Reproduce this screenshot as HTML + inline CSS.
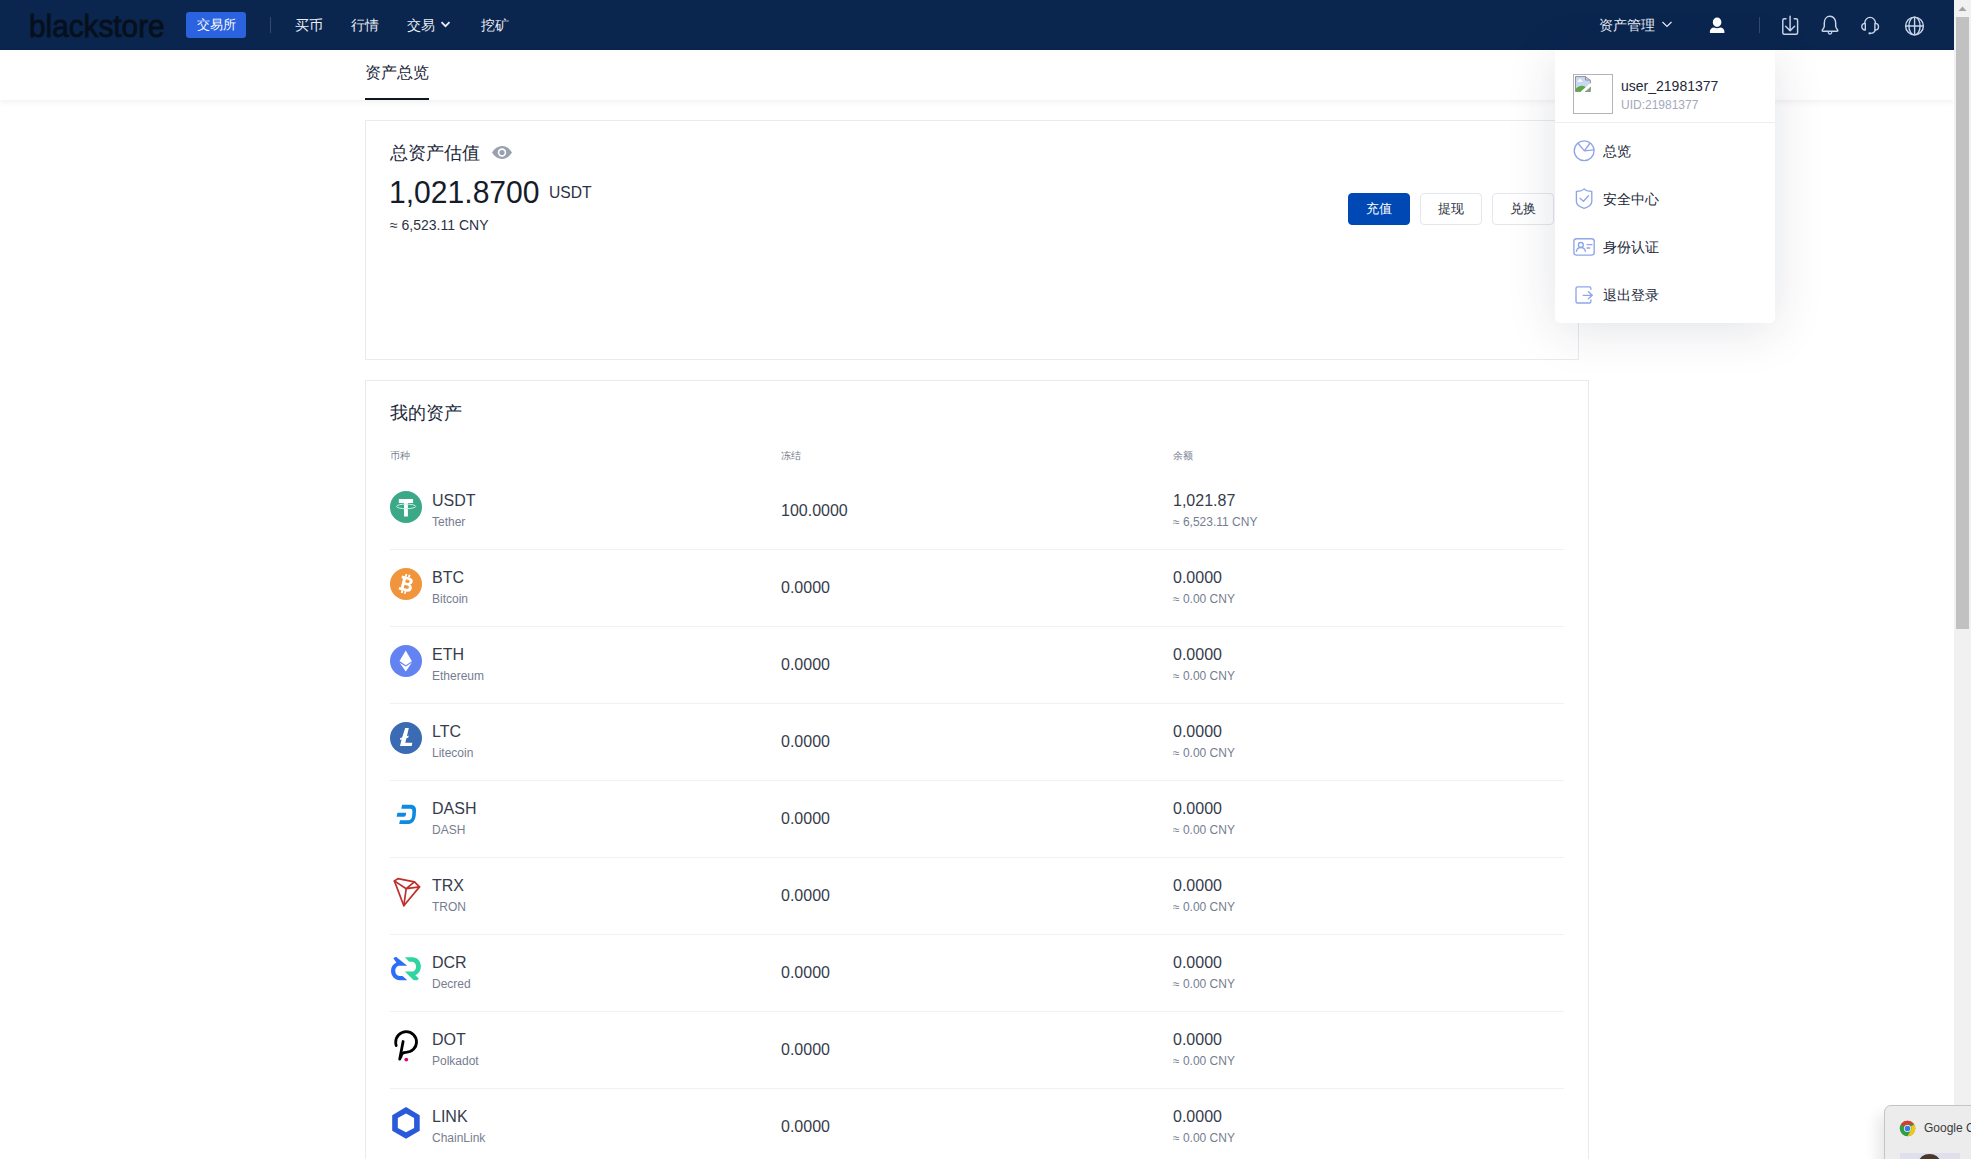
<!DOCTYPE html>
<html><head><meta charset="utf-8">
<style>
*{margin:0;padding:0;box-sizing:border-box}
html,body{width:1971px;height:1159px;overflow:hidden;background:#fff;font-family:"Liberation Sans",sans-serif;color:#1f2533}
#hdr{position:absolute;left:0;top:0;width:1954px;height:50px;background:#0a254e}
#logo{position:absolute;left:29px;top:8px;font-size:32px;line-height:37px;color:#06101c;transform:scaleX(0.93);transform-origin:0 0;-webkit-text-stroke:0.8px #06101c;white-space:nowrap}
#exbtn{position:absolute;left:186px;top:12px;width:60px;height:26px;background:#2a62e0;border-radius:3px;color:#fff;font-size:13px;line-height:26px;text-align:center}
.vdiv{position:absolute;width:1px;background:#34496e}
.nav{position:absolute;top:16px;font-size:14px;color:#e9edf5;line-height:18px}
.hic{position:absolute}
#sub{position:absolute;left:0;top:50px;width:1954px;height:50px;background:#fff;box-shadow:0 2px 6px rgba(0,0,0,0.06)}
#tab{position:absolute;left:365px;top:13px;font-size:16px;line-height:20px;color:#22283a}
#tabline{position:absolute;left:365px;top:48px;width:64px;height:2px;background:#111624}
.card{position:absolute;border:1px solid #e8eaef;background:#fff}
#c1title{position:absolute;left:390px;top:142px;font-size:18px;line-height:22px;color:#22283a}
#bignum{position:absolute;left:389px;top:174px;font-size:32px;line-height:36px;color:#161b2a;transform:scaleX(0.94);transform-origin:0 0;white-space:nowrap}
#bigunit{position:absolute;left:549px;top:183px;font-size:17px;line-height:19px;color:#2b3142;transform:scaleX(0.92);transform-origin:0 0}
#bigcny{position:absolute;left:390px;top:217px;font-size:14px;line-height:16px;color:#2b3142}
.btn{position:absolute;top:193px;width:62px;height:32px;border-radius:4px;font-size:13px;line-height:30px;text-align:center;border:1px solid #e3e6ec;color:#2b3142;background:#fff}
.btn.pri{background:#0049b4;border-color:#0049b4;color:#fff}
#c2title{position:absolute;left:390px;top:402px;font-size:18px;line-height:22px;color:#22283a}
.th{position:absolute;top:449px;font-size:10px;line-height:13px;color:#767d8f}
.row{position:absolute;left:390px;width:1174px;height:77px}
.row .ic{position:absolute;left:0;top:19px;width:32px;height:32px}
.row .ic svg{display:block}
.row .sym{position:absolute;left:42px;top:20px;font-size:16px;line-height:18px;color:#363c4c}
.row .nm{position:absolute;left:42px;top:43px;font-size:12px;line-height:14px;color:#767d90}
.row .frz{position:absolute;left:391px;top:30px;font-size:16px;line-height:18px;color:#363c4c}
.row .bal{position:absolute;left:783px;top:20px;font-size:16px;line-height:18px;color:#363c4c}
.row .cny{position:absolute;left:783px;top:43px;font-size:12px;line-height:14px;color:#767d90}
.row .sep{position:absolute;left:0;top:77px;width:1174px;height:1px;background:#f0f1f4}
#dd{position:absolute;left:1555px;top:50px;width:220px;height:273px;background:#fff;border-radius:0 0 5px 5px;box-shadow:0 6px 50px rgba(30,40,70,0.13)}
#avatar{position:absolute;left:18px;top:24px;width:40px;height:40px;border:1px solid #b4b4b4}
#uname{position:absolute;left:66px;top:28px;font-size:14px;line-height:16px;color:#22283a}
#uid{position:absolute;left:66px;top:48px;font-size:12px;line-height:14px;color:#a3a9bc}
#ddsep{position:absolute;left:0;top:72px;width:220px;height:1px;background:#eceef2}
.ddi{position:absolute;left:48px;font-size:14px;line-height:16px;color:#22283a}
.ddic{position:absolute;left:17px}
#scroll{position:absolute;left:1954px;top:0;width:17px;height:1159px;background:#f1f1f1}
#thumb{position:absolute;left:1956px;top:17px;width:13px;height:612px;background:#c1c1c1}
#notif{position:absolute;left:1884px;top:1105px;width:120px;height:80px;background:#ececec;border:1px solid #c4c4c4;border-radius:7px;box-shadow:-7px 9px 14px rgba(0,0,0,0.09)}
#ntext{white-space:nowrap;position:absolute;left:39px;top:15px;font-size:12px;line-height:14px;color:#3a3a3a}
#nimg{position:absolute;left:15px;top:47px;width:60px;height:20px;background:#dfe0ec}
</style></head><body>
<div id="hdr">
  <div id="logo">blackstore</div>
  <div id="exbtn">交易所</div>
  <div class="vdiv" style="left:270px;top:17px;height:16px"></div>
  <div class="nav" style="left:295px">买币</div>
  <div class="nav" style="left:351px">行情</div>
  <div class="nav" style="left:407px">交易</div>
  <svg class="hic" style="left:440px;top:20px" width="11" height="9" viewBox="0 0 11 9"><path d="M1.5 2.2L5.5 6.2 9.5 2.2" fill="none" stroke="#e9edf5" stroke-width="1.8"/></svg>
  <div class="nav" style="left:481px">挖矿</div>
  <div class="nav" style="left:1599px">资产管理</div>
  <svg class="hic" style="left:1661px;top:20px" width="12" height="9" viewBox="0 0 12 9"><path d="M1.5 2L6 6.5 10.5 2" fill="none" stroke="#e9edf5" stroke-width="1.2"/></svg>
  <svg class="hic" style="left:1709px;top:16px" width="17" height="18" viewBox="0 0 17 18"><path d="M8.1 1.4C10.6 1.4 12.4 3.5 12.4 6.1 12.4 8.8 10.5 11 8.1 11 5.7 11 3.8 8.8 3.8 6.1 3.8 3.5 5.6 1.4 8.1 1.4Z" fill="#fff"/><path d="M0.9 17.1V15.6C0.9 13.4 2.6 11.6 5 11.5 6 12.1 7.1 12.3 8.1 12.3S10.2 12.1 11.2 11.5C13.7 11.6 15.4 13.4 15.4 15.6V17.1Z" fill="#fff"/></svg>
  <div class="vdiv" style="left:1759px;top:17px;height:16px"></div>
  <svg class="hic" style="left:1781px;top:15px" width="19" height="21" viewBox="0 0 19 21"><g fill="none" stroke="#c8d5e8" stroke-width="1.45" stroke-linecap="round" stroke-linejoin="round"><path d="M5 3.7H3.3C2.4 3.7 1.8 4.3 1.8 5.2V17.8C1.8 18.7 2.4 19.3 3.3 19.3H15.1C16 19.3 16.6 18.7 16.6 17.8V5.2C16.6 4.3 16 3.7 15.1 3.7H13.2"/><path d="M9.1 1.1V15.6M4.6 11.2L9.1 15.7 13.6 11.2"/></g></svg>
  <svg class="hic" style="left:1820px;top:15px" width="20" height="21" viewBox="0 0 20 21"><g fill="none" stroke="#c8d5e8" stroke-width="1.45" stroke-linecap="round" stroke-linejoin="round"><path d="M10 1.3C6.6 1.3 4.3 4.2 4.3 8V11.3C4.3 12.9 2.5 14.2 2.2 15.4 2.1 15.9 2.4 16.2 3 16.2H17C17.6 16.2 17.9 15.9 17.8 15.4 17.5 14.2 15.7 12.9 15.7 11.3V8C15.7 4.2 13.4 1.3 10 1.3Z"/><path d="M8.3 17.6C8.6 18.6 9.2 19.1 10 19.1S11.4 18.6 11.7 17.6"/></g></svg>
  <svg class="hic" style="left:1860px;top:15px" width="22" height="22" viewBox="0 0 22 22"><g fill="none" stroke="#c8d5e8" stroke-width="1.4" stroke-linecap="round" stroke-linejoin="round"><path d="M4.7 8.4C4.7 5 7.1 2.4 10.1 2.4S15.5 5 15.5 8.4"/><path d="M5.3 8.4V15C3.1 15 1.8 13.5 1.8 11.7S3.1 8.4 5.3 8.4Z"/><path d="M14.9 8.4V15C17.1 15 18.5 13.5 18.5 11.7S17.1 8.4 14.9 8.4Z"/><path d="M15.2 15.2C14.7 17.2 13 18.3 10.4 18.4"/></g><ellipse cx="9.7" cy="18.35" rx="1.35" ry="1.1" fill="#c8d5e8"/></svg>
  <svg class="hic" style="left:1903px;top:15px" width="22" height="22" viewBox="0 0 22 22"><g fill="none" stroke="#c8d5e8" stroke-width="1.4"><circle cx="11.5" cy="11" r="8.9"/><ellipse cx="11.5" cy="11" rx="5.6" ry="8.9"/><path d="M11.6 2.1V19.9M2.6 11H20.4"/></g></svg>
</div>
<div id="sub">
  <div id="tab">资产总览</div>
  <div id="tabline"></div>
</div>

<div class="card" style="left:365px;top:120px;width:1214px;height:240px"></div>
<div id="c1title">总资产估值</div>
<svg style="position:absolute;left:491px;top:145px" width="22" height="15" viewBox="0 0 22 15"><path d="M1 7.5C3.5 3.2 7 1 11 1s7.5 2.2 10 6.5C18.5 11.8 15 14 11 14S3.5 11.8 1 7.5z" fill="#9aa0ae"/><circle cx="11" cy="7.5" r="4.2" fill="#fff"/><circle cx="11" cy="7.5" r="2.6" fill="#9aa0ae"/></svg>
<div id="bignum">1,021.8700</div>
<div id="bigunit">USDT</div>
<div id="bigcny">≈ 6,523.11 CNY</div>
<div class="btn pri" style="left:1348px">充值</div>
<div class="btn" style="left:1420px">提现</div>
<div class="btn" style="left:1492px">兑换</div>

<div class="card" style="left:365px;top:380px;width:1224px;height:820px"></div>
<div id="c2title">我的资产</div>
<div class="th" style="left:390px">币种</div>
<div class="th" style="left:781px">冻结</div>
<div class="th" style="left:1173px">余额</div>
<div class="row" style="top:472px">
<div class="ic"><svg width="32" height="32" viewBox="0 0 32 32"><circle cx="16" cy="16" r="16" fill="#3ba987"/><path d="M8.8 8h14.3v4.05h-5.2V25.4h-3.9V12.05H8.8z" fill="#fff"/><ellipse cx="16.1" cy="15.4" rx="9.6" ry="2.3" fill="none" stroke="#c6f5e2" stroke-width="1"/></svg></div>
<div class="sym">USDT</div><div class="nm">Tether</div>
<div class="frz">100.0000</div>
<div class="bal">1,021.87</div><div class="cny">≈ 6,523.11 CNY</div>
<div class="sep"></div>
</div>
<div class="row" style="top:549px">
<div class="ic"><svg width="32" height="32" viewBox="0 0 32 32"><circle cx="16" cy="16" r="16" fill="#f0953c"/><g transform="rotate(14 16 16)" fill="#fff"><path fill-rule="evenodd" d="M10.2 8.8H17.6C20.4 8.8 22 10.3 22 12.5 22 14 21.2 15 20 15.5 21.7 16 22.7 17.3 22.7 19.2 22.7 21.7 20.8 23.2 17.9 23.2H10.2V20.6H11.8V11.4H10.2ZM14.8 11.5V14.6H17.2C18.4 14.6 19 14 19 13.05S18.4 11.5 17.2 11.5ZM14.8 17.1V20.5H17.6C19 20.5 19.7 19.8 19.7 18.8S19 17.1 17.6 17.1Z"/><path d="M13.1 6.2h1.8v2.8h-1.8zM16.3 6.2h1.8v2.8h-1.8zM13.1 23h1.8v2.8h-1.8zM16.3 23h1.8v2.8h-1.8z"/></g></svg></div>
<div class="sym">BTC</div><div class="nm">Bitcoin</div>
<div class="frz">0.0000</div>
<div class="bal">0.0000</div><div class="cny">≈ 0.00 CNY</div>
<div class="sep"></div>
</div>
<div class="row" style="top:626px">
<div class="ic"><svg width="32" height="32" viewBox="0 0 32 32"><circle cx="16" cy="16" r="16" fill="#6283f1"/><path d="M15.8 5.4L21.9 16.2 15.8 20.2 9.5 16z" fill="#fff"/><path d="M9.6 17.8L15.8 21.5 21.9 17.6 15.8 26.4z" fill="#fff"/></svg></div>
<div class="sym">ETH</div><div class="nm">Ethereum</div>
<div class="frz">0.0000</div>
<div class="bal">0.0000</div><div class="cny">≈ 0.00 CNY</div>
<div class="sep"></div>
</div>
<div class="row" style="top:703px">
<div class="ic"><svg width="32" height="32" viewBox="0 0 32 32"><circle cx="16" cy="16" r="16" fill="#3b6bb3"/><path d="M15.2 6H18.8L16.9 14.3 18.7 13.6 18.3 15.6 16.4 16.3 15.3 20.8H22.3L21.7 23.9H10L11.6 17.4 9.9 18.1 10.3 16.1 12.1 15.4Z" fill="#fff"/></svg></div>
<div class="sym">LTC</div><div class="nm">Litecoin</div>
<div class="frz">0.0000</div>
<div class="bal">0.0000</div><div class="cny">≈ 0.00 CNY</div>
<div class="sep"></div>
</div>
<div class="row" style="top:780px">
<div class="ic"><svg width="32" height="32" viewBox="0 0 32 32"><path d="M12.1 5.84H20.5C24 5.84 26.2 8 26.06 11.5L25.8 16C25.5 21 22.5 25.06 18.5 25.06H9.2L9.95 21.2H18.3C20.5 21.2 21.9 19.5 22.1 17L22.4 12.2C22.5 10.5 21.6 9.72 20.2 9.72H11.3Z M7.4 13.8H16.2L15.9 15.8C15.7 17 15 17.7 14 17.7H6.65Z" fill="#0d8be2"/></svg></div>
<div class="sym">DASH</div><div class="nm">DASH</div>
<div class="frz">0.0000</div>
<div class="bal">0.0000</div><div class="cny">≈ 0.00 CNY</div>
<div class="sep"></div>
</div>
<div class="row" style="top:857px">
<div class="ic"><svg width="32" height="32" viewBox="0 0 32 32"><g fill="none" stroke="#bf2f2a" stroke-width="1.7" stroke-linejoin="round" stroke-linecap="round"><path d="M4.4 4.9L7.9 2.7L24.4 5.9L29.5 10.9L13.8 29.7Z"/><path d="M4.4 4.9L16.2 12.7L13.8 29.7M16.2 12.7L24.4 5.9M16.2 12.7L29.5 10.9"/></g></svg></div>
<div class="sym">TRX</div><div class="nm">TRON</div>
<div class="frz">0.0000</div>
<div class="bal">0.0000</div><div class="cny">≈ 0.00 CNY</div>
<div class="sep"></div>
</div>
<div class="row" style="top:934px">
<div class="ic"><svg width="32" height="32" viewBox="0 0 32 32"><path d="M3.5 5.6C3.9 4.6 4.9 4.1 6.3 4.1L17.2 12.8H9.4C7 12.8 5.3 15 5.3 17.7 5.3 20.6 7.2 22.9 9.4 22.9H12.5L17.3 27.2H9.75C4.9 27.2 1.0 22.9 1.0 17.7 1.0 14 3 11 6.4 9.5Z" fill="#2b6ff9"/><path d="M14.8 4.3H22.6C27.4 4.3 30.9 8.5 30.9 13.6 30.9 17.5 28.8 20.7 25.3 22.3L28.8 25.4C28.4 26.6 27.4 27.2 26.1 27.2H23.7L14.8 18.5H22.2C24.6 18.5 26.1 16.3 26.1 13.7 26.1 10.9 24.4 8.75 22.2 8.75H19.3Z" fill="#2ed5a0"/></svg></div>
<div class="sym">DCR</div><div class="nm">Decred</div>
<div class="frz">0.0000</div>
<div class="bal">0.0000</div><div class="cny">≈ 0.00 CNY</div>
<div class="sep"></div>
</div>
<div class="row" style="top:1011px">
<div class="ic"><svg width="32" height="32" viewBox="0 0 32 32"><path d="M6.2 15.6C5.8 14.6 5.7 13.5 5.7 12.3 5.7 6.3 10.4 1.6 16.2 1.6 22 1.6 26.5 6.3 26.5 12 26.5 17.9 21.8 22.3 16 22.3 13 22.3 11.3 24 10.9 27" fill="none" stroke="#000" stroke-width="2.8" stroke-linecap="round"/><path d="M13.1 11.5L9.7 29.2" fill="none" stroke="#000" stroke-width="2.8" stroke-linecap="round"/><circle cx="16.3" cy="29.6" r="1.9" fill="#d8057c"/></svg></div>
<div class="sym">DOT</div><div class="nm">Polkadot</div>
<div class="frz">0.0000</div>
<div class="bal">0.0000</div><div class="cny">≈ 0.00 CNY</div>
<div class="sep"></div>
</div>
<div class="row" style="top:1088px">
<div class="ic"><svg width="32" height="32" viewBox="0 0 32 32"><path fill-rule="evenodd" d="M16 0L29.7 8.3V23.7L16 31.8 2.2 23.7V8.3ZM16 6.6L7.8 11.05V21L16 25.2 24.1 21V11.05Z" fill="#2a59da"/></svg></div>
<div class="sym">LINK</div><div class="nm">ChainLink</div>
<div class="frz">0.0000</div>
<div class="bal">0.0000</div><div class="cny">≈ 0.00 CNY</div>
<div class="sep"></div>
</div>

<div id="dd">
  <div id="avatar"><svg style="position:absolute;left:0px;top:0px" width="18" height="18" viewBox="0 0 18 18"><path d="M1.5 1.55H11.5L16.4 5.5V8.6L7.8 16.5H1.5Z" fill="#c8d8f1"/><path d="M3.3 6.7L5.6 4.1Q6.1 3.6 6.7 4.2L8.8 6.7Z" fill="#fff"/><path d="M1.5 16.5V14.3Q3.8 10.7 8.2 10.7 10.5 10.8 11.9 12.2L7.8 16.5Z" fill="#5aa941"/><path d="M11.1 16.5L16.4 11.9V16.5Z" fill="#7fae72"/><g fill="none" stroke="#8a8a8a" stroke-width="0.9"><path d="M7.8 16.5H1.5V1.55H11.5L16.4 5.5V8.6M11.5 1.55V5.07H16.4M16.4 11.9V16.5H11.1"/></g><path d="M7.3 17.2L16.9 8.8" stroke="#fff" stroke-width="1.6"/></svg></div>
  <div id="uname">user_21981377</div>
  <div id="uid">UID:21981377</div>
  <div id="ddsep"></div>
  <svg class="ddic" style="top:89px" width="24" height="24" viewBox="0 0 24 24"><g fill="none" stroke="#8fa5eb" stroke-width="1.35" stroke-linecap="round" stroke-linejoin="round"><circle cx="12.15" cy="11.7" r="9.9"/><path d="M6 4.3L12.4 11.85 17.7 4.5M12.4 11.85L21.8 10.9"/></g></svg>
  <div class="ddi" style="top:93px">总览</div>
  <svg class="ddic" style="top:137px" width="24" height="24" viewBox="0 0 24 24"><g fill="none" stroke="#8fa5eb" stroke-width="1.35" stroke-linecap="round" stroke-linejoin="round"><path d="M12.16 1.9C10.8 3.4 8.2 4.3 4.4 4.45V14.5C4.4 17.5 8 20 12.16 21.4 16.3 20 19.8 17.5 19.8 14.5V4.45C16.1 4.3 13.5 3.4 12.16 1.9Z"/><path d="M8 11.3L11.5 14.3 16.5 8.8"/></g></svg>
  <div class="ddi" style="top:141px">安全中心</div>
  <svg class="ddic" style="top:185px" width="24" height="24" viewBox="0 0 24 24"><g fill="none" stroke="#8fa5eb" stroke-width="1.35" stroke-linecap="round" stroke-linejoin="round"><rect x="1.9" y="3.7" width="20.3" height="16.4" rx="2.6"/><circle cx="8.85" cy="9.9" r="2.45"/><path d="M4.4 16.3C4.9 14 6.6 12.5 8.85 12.5S12.9 14 13.4 16.3M15.1 9.65H19.9M15.1 12.95H17.7"/></g></svg>
  <div class="ddi" style="top:189px">身份认证</div>
  <svg class="ddic" style="top:233px" width="24" height="24" viewBox="0 0 24 24"><g fill="none" stroke="#8fa5eb" stroke-width="1.35" stroke-linecap="round" stroke-linejoin="round"><path d="M18.9 6.3V5.4C18.9 4.5 18.3 3.85 17.4 3.85H5.5C4.6 3.85 4 4.5 4 5.4V18.5C4 19.4 4.6 20 5.5 20H17.4C18.3 20 18.9 19.4 18.9 18.5V16.8"/><path d="M11.2 12.3H20.3M16.4 8.7L20.3 12.3 16.4 15.7"/></g></svg>
  <div class="ddi" style="top:237px">退出登录</div>
</div>

<div id="scroll"></div><div id="thumb"></div>
<svg style="position:absolute;left:1957px;top:5px" width="11" height="7" viewBox="0 0 11 7"><path d="M1.5 6L5.5 1.5 9.5 6z" fill="#a3a3a3"/></svg>

<div id="notif">
  <svg style="position:absolute;left:14px;top:14px" width="17" height="17" viewBox="0 0 48 48"><circle cx="24" cy="24" r="22" fill="#2ea043"/><path d="M24 2A22 22 0 0 1 43.05 13H24A11 11 0 0 0 14.5 18.5L5 13A22 22 0 0 1 24 2z" fill="#db3c30"/><path d="M43.05 13A22 22 0 0 1 24 46L33.5 29.5A11 11 0 0 0 33.5 18.5z" fill="#f5c518"/><circle cx="24" cy="24" r="10" fill="#fff"/><circle cx="24" cy="24" r="8" fill="#3a7ae8"/></svg>
  <div id="ntext">Google Chrome</div>
  <div id="nimg"><div style="position:absolute;left:19px;top:1px;width:21px;height:16px;border-radius:50%;background:#4a372c"></div></div>
</div>
</body></html>
